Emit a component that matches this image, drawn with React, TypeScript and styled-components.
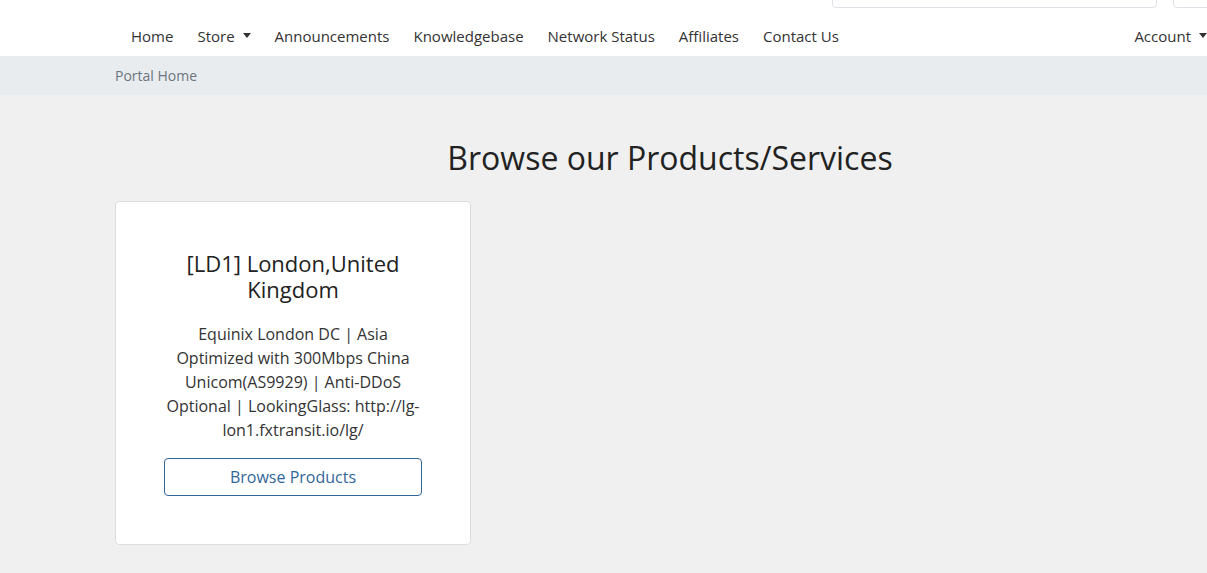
import React from "react";
import styled, { createGlobalStyle } from "styled-components";

const Global = createGlobalStyle`
  html, body { margin: 0; padding: 0; }
  body {
    background: #f0f0f0;
    font-family: "Open Sans", "Noto Sans", sans-serif;
    color: #333;
    overflow-x: hidden;
  }
  * { box-sizing: border-box; }
`;

const Header = styled.header`
  background: #fff;
`;

const Container = styled.div`
  width: 1110px;
  margin-left: 115px;
`;

const TopBar = styled.div`
  height: 8px;
  overflow: hidden;
  display: flex;
  justify-content: flex-end;
  align-items: flex-end;
  gap: 16px;
`;

const SearchBox = styled.div<{ $w: number }>`
  width: ${(p) => p.$w}px;
  height: 38px;
  flex: none;
  border: 1px solid #dee2e6;
  border-radius: 4px;
  background: #fff;
`;

const NavBar = styled.nav`
  height: 48px;
  display: flex;
  align-items: center;
  padding-top: 7px;
`;

const NavList = styled.ul`
  list-style: none;
  display: flex;
  gap: 24px;
  margin: 0 18px 0 16px;
  padding: 0;
  flex: 1;
`;

const NavItem = styled.li<{ $right?: boolean }>`
  font-size: 15px;
  color: #333;
  display: flex;
  align-items: center;
  white-space: nowrap;
  margin-left: ${(p) => (p.$right ? "auto" : "0")};
`;

const Caret = styled.span`
  display: inline-block;
  margin-left: 8px;
  width: 0;
  height: 0;
  border-left: 4.5px solid transparent;
  border-right: 4.5px solid transparent;
  border-top: 5px solid #333;
`;

const Breadcrumb = styled.div`
  background: #e9ecef;
  height: 39px;
  display: flex;
  align-items: center;
  padding-bottom: 2px;
`;

const Crumb = styled.span`
  font-size: 14px;
  color: #6c757d;
`;

const Main = styled.main`
  padding-top: 42px;
`;

const Title = styled.h1`
  margin: 0 0 22px;
  text-align: center;
  font-size: 32px;
  font-weight: 400;
  line-height: 42px;
  color: #222;
`;

const Card = styled.div`
  width: 356px;
  background: #fff;
  border: 1px solid #ddd;
  border-radius: 4px;
  padding: 48px 40px;
  display: flex;
  flex-direction: column;
  align-items: center;
  text-align: center;
`;

const CardTitle = styled.h3`
  margin: 0 0 20px;
  font-size: 22px;
  font-weight: 400;
  line-height: 26px;
  color: #222;
`;

const CardText = styled.p`
  width: 269px;
  margin: 0 0 16px;
  font-size: 16px;
  line-height: 24px;
  color: #333;
`;

const Button = styled.button`
  width: 258px;
  height: 38px;
  border: 1px solid #336699;
  border-radius: 4px;
  background: #fff;
  color: #336699;
  font-family: inherit;
  font-size: 16px;
  cursor: pointer;
`;

const navItems = [
  { label: "Home" },
  { label: "Store", caret: true },
  { label: "Announcements" },
  { label: "Knowledgebase" },
  { label: "Network Status" },
  { label: "Affiliates" },
  { label: "Contact Us" },
];

export default function App() {
  return (
    <>
      <Global />
      <Header>
        <Container>
          <TopBar>
            <SearchBox $w={325} />
            <SearchBox $w={52} />
          </TopBar>
          <NavBar>
            <NavList>
              {navItems.map((n) => (
                <NavItem key={n.label}>
                  {n.label}
                  {n.caret && <Caret />}
                </NavItem>
              ))}
              <NavItem $right>
                Account
                <Caret />
              </NavItem>
            </NavList>
          </NavBar>
        </Container>
      </Header>
      <Breadcrumb>
        <Container>
          <Crumb>Portal Home</Crumb>
        </Container>
      </Breadcrumb>
      <Main>
        <Container>
          <Title>Browse our Products/Services</Title>
          <Card>
            <CardTitle>[LD1] London,United Kingdom</CardTitle>
            <CardText>
              Equinix London DC | Asia Optimized with 300Mbps China Unicom(AS9929) | Anti-DDoS Optional | LookingGlass: http://lg-lon1.fxtransit.io/lg/
            </CardText>
            <Button>Browse Products</Button>
          </Card>
        </Container>
      </Main>
    </>
  );
}
